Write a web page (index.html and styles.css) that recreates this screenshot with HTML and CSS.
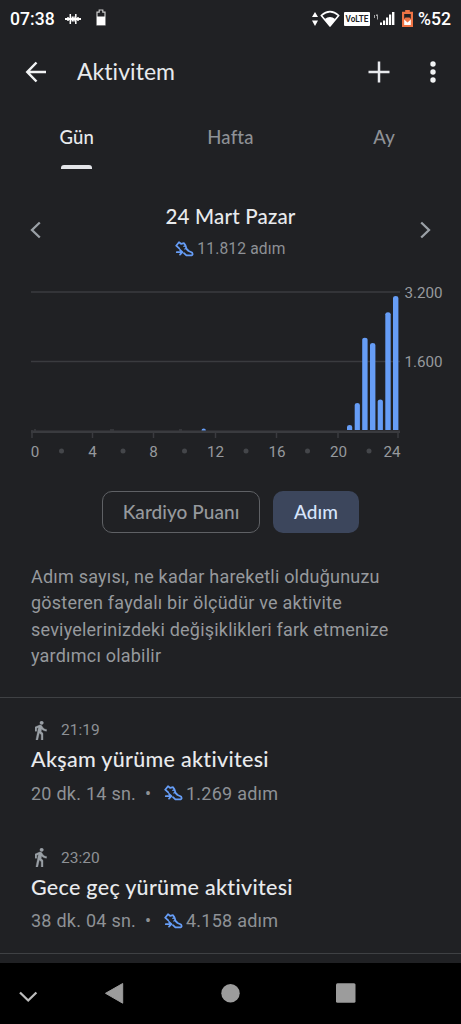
FILE: index.html
```html
<!DOCTYPE html>
<html lang="tr">
<head>
    <meta charset="UTF-8">
    <meta name="viewport" content="width=device-width, initial-scale=1.0">
    <title>Aktivitem</title>
    <link rel="stylesheet" href="styles.css">
</head>
<body>
    <svg class="defs" width="0" height="0">
        <symbol id="shoe" viewBox="0 0 19 16">
            <g fill="none" stroke="#669df6" stroke-width="1.8" stroke-linejoin="round" stroke-linecap="round">
                <path d="M4.200 7.400 1.200 4.700 4 1.300 6.300 2.900 9 2.200 10.400 4.300 11.600 8 13.600 10 17 11.500Q18.400 13.800 16.600 14.400H11.400L9 12.200"/>
                <path d="M1.800 11.200H7.200M5 8.800 7.400 11.200 5 13.600"/>
                <path d="M8.800 5.400 10.200 4.900M9.800 8 11.200 7.400" stroke-width="1.300"/>
            </g>
        </symbol>
        <symbol id="walk" viewBox="6 1.5 13.5 21.5">
            <path fill="#9aa0a6" stroke="#9aa0a6" stroke-width=".4" d="M13.500 5.500c1.100 0 2-.9 2-2s-.9-2-2-2-2 .9-2 2 .9 2 2 2zM9.800 8.900L7 23h2.100l1.800-8 2.100 2v6h2v-7.500l-2.100-2 .6-3C14.800 12 16.800 13 19 13v-2c-1.900 0-3.500-1-4.300-2.400l-1-1.600c-.4-.6-1-1-1.700-1-.3 0-.5.1-.8.1L6 8.300V13h2V9.600l1.800-.7"/>
        </symbol>
    </svg>

    <header class="status">
        <span class="clock">07:38</span>
        <svg class="wave" width="16" height="14" viewBox="0 0 16 14" stroke="#fff" stroke-width="1.5">
            <path d="M0 7H16" stroke-width="2"/>
            <path d="M3 5V9M5.300 2V12M7.300 4.500V9.500M9 4.500V9.500M10.800 2V12M13 5V9"/>
        </svg>
        <svg class="battery" width="10" height="17" viewBox="0 0 10 17">
            <path d="M1 16V3.200H3.200V1H6.800V3.200H9V16Z" fill="none" stroke="#ccc" stroke-width="1.200"/>
            <path d="M1 7.500H9V16H1Z" fill="#fff"/>
        </svg>
        <div class="status-right">
            <svg width="6" height="14" viewBox="0 0 6 14" fill="#fff"><path d="M3 0 6 5H0ZM3 14 0 8.500H6Z"/></svg>
            <svg class="wifi" width="20" height="18" viewBox="0 0 20 18">
                <path d="M1.300 5.500Q10-2.200 18.700 5.500L10 16Z" fill="none" stroke="#fff" stroke-width="1.600" stroke-linejoin="round"/>
                <path d="M4.800 9Q10 5.200 15.200 9L10 16.500Z" fill="#fff"/>
            </svg>
            <span class="volte">VoLTE</span>
            <svg class="signal" width="21" height="15" viewBox="0 0 21 15" fill="#fff">
                <path d="M0 4H1V7H0ZM2 3.500H4V8.500H3V5H2Z" opacity=".6"/>
                <path d="M6 11.500H8V14H6ZM9 9.500H11.200V14H9ZM12 6.500H14.200V14H12ZM15 3.500H17.200V14H15ZM18 1H20.400V14H18Z"/>
            </svg>
            <svg class="low" width="11" height="17" viewBox="0 0 11 17">
                <path d="M3.200 0H7.800V1.800H11V17H0V1.800H3.200Z" fill="#ee7344"/>
                <path d="M2.200 4H8.800V9L7.500 7.500H3.500L2.200 9Z" fill="#202124"/>
                <path d="M2.200 9.500 5.500 12.500 8.800 9.500V15H2.200Z" fill="#fff"/>
            </svg>
            <span class="percent">%52</span>
        </div>
    </header>

    <div class="appbar">
        <svg width="22" height="22" viewBox="0 0 22 22" fill="none" stroke="#f1f3f4" stroke-width="2.500"><path d="M21 11H2.500M11.500 1.500 2.300 11 11.500 20.500"/></svg>
        <h1>Aktivitem</h1>
        <svg class="plus" width="22" height="22" viewBox="0 0 22 22" stroke="#e8eaed" stroke-width="2.500"><path d="M11 .5V21.500M.5 11H21.500"/></svg>
        <svg width="6" height="22" viewBox="0 0 6 22" fill="#f1f3f4"><circle cx="3" cy="3" r="2.700"/><circle cx="3" cy="11" r="2.700"/><circle cx="3" cy="19" r="2.700"/></svg>
    </div>

    <nav class="tabs">
        <a class="tab active">Gün</a>
        <a class="tab">Hafta</a>
        <a class="tab">Ay</a>
    </nav>

    <section class="day">
        <svg width="12" height="18" viewBox="0 0 12 18" fill="none" stroke="#9aa0a6" stroke-width="2.300"><path d="M10.800 1.500 3 9 10.800 16.500"/></svg>
        <div class="day-info">
            <h2>24 Mart Pazar</h2>
            <p><svg class="shoe" width="19" height="16"><use href="#shoe"/></svg>11.812 adım</p>
        </div>
        <svg width="12" height="18" viewBox="0 0 12 18" fill="none" stroke="#9aa0a6" stroke-width="2.300"><path d="M1.200 1.500 9 9 1.200 16.500"/></svg>
    </section>

    <svg class="chart" width="461" height="190" viewBox="0 280 461 190">
        <g class="grid">
            <path d="M31 292H400M31 361.500H400"/>
            <path class="axis" d="M31 431.800H400"/>
            <path d="M32 430V438M92.500 432V438M153.500 432V438M215.500 432V438M276.500 432V438M338 432V438M398 432V438"/>
            <path d="M34 430H36M110 430H114M179 430H182"/>
        </g>
        <g class="bars">
            <path d="M201.500 430.500a2.200 2 0 0 1 4.400 0z"/>
            <path d="M347 430V427q0-2 2.600-2t2.600 2V430z"/>
            <path d="M354.700 430V405q0-2 2.600-2t2.600 2V430z"/>
            <path d="M362.200 430V340q0-2.300 2.700-2.300t2.700 2.300V430z"/>
            <path d="M370 430V345q0-2 2.700-2t2.700 2V430z"/>
            <path d="M377.700 430V401.500q0-2 2.600-2t2.600 2V430z"/>
            <path d="M385.300 430V314.300q0-2 2.700-2t2.700 2V430z"/>
            <path d="M393 430V298q0-2 2.700-2t2.700 2V430z"/>
        </g>
        <g class="dots">
            <circle cx="61.500" cy="451" r="2.500"/><circle cx="123" cy="451" r="2.500"/><circle cx="184.500" cy="451" r="2.500"/>
            <circle cx="246" cy="451" r="2.500"/><circle cx="307.500" cy="451" r="2.500"/><circle cx="369" cy="451" r="2.500"/>
        </g>
        <g class="labels">
            <text x="35" y="456.500">0</text><text x="92.500" y="456.500">4</text><text x="153.500" y="456.500">8</text>
            <text x="215.500" y="456.500">12</text><text x="277" y="456.500">16</text><text x="338.500" y="456.500">20</text><text x="392" y="456.500">24</text>
            <text x="423.500" y="298">3.200</text><text x="423.500" y="367">1.600</text>
        </g>
    </svg>

    <div class="chips">
        <button class="chip chip-outline">Kardiyo Puanı</button>
        <button class="chip chip-on">Adım</button>
    </div>

    <p class="about">Adım sayısı, ne kadar hareketli olduğunuzu<br>gösteren faydalı bir ölçüdür ve aktivite<br>seviyelerinizdeki değişiklikleri fark etmenize<br>yardımcı olabilir</p>

    <main class="list">
        <article class="entry">
            <div class="time"><svg width="12" height="19"><use href="#walk"/></svg>21:19</div>
            <h3>Akşam yürüme aktivitesi</h3>
            <div class="meta"><span class="length">20 dk. 14 sn.</span><span class="sep">•</span><svg class="shoe" width="19" height="16"><use href="#shoe"/></svg>1.269 adım</div>
        </article>
        <article class="entry">
            <div class="time"><svg width="12" height="19"><use href="#walk"/></svg>23:20</div>
            <h3>Gece geç yürüme aktivitesi</h3>
            <div class="meta"><span class="length">38 dk. 04 sn.</span><span class="sep">•</span><svg class="shoe" width="19" height="16"><use href="#shoe"/></svg>4.158 adım</div>
        </article>
    </main>

    <footer class="navbar">
        <svg width="461" height="61" viewBox="0 963 461 61" fill="#9c9c9c">
            <path d="M20 992.500 28.200 1000.500 36.400 992.500" fill="none" stroke="#bdbdbd" stroke-width="2.300"/>
            <path d="M105.500 993.300 122.700 983.500V1003.200Z" stroke="#9c9c9c" stroke-linejoin="round"/>
            <circle cx="230.500" cy="993.200" r="9.200"/>
            <rect x="336" y="983.300" width="19.500" height="19.500" rx="1.500"/>
        </svg>
    </footer>
</body>
</html>
```

FILE: styles.css
```css
* {
    box-sizing: border-box;
}
body {
    margin: 0;
    width: 461px;
    height: 1024px;
    overflow: hidden;
    display: flex;
    flex-direction: column;
    background: #202124;
    color: #e8eaed;
    font-family: Roboto, sans-serif;
}
h1, h2, h3, p {
    margin: 0;
}
svg {
    display: block;
    flex: none;
}
.defs {
    position: absolute;
}
h1, h2, h3, .tab, .chip {
    font-family: Lato, sans-serif;
    white-space: nowrap;
}

/* status bar */
.status {
    height: 36px;
    display: flex;
    align-items: center;
    padding: 1px 10px 0 10px;
    color: #fff;
    font-size: 17.6px;
    font-weight: 500;
}
.clock {
    width: 55px;
}
.battery {
    margin-left: 15px;
    margin-top: -2px;
}
.status-right {
    margin-left: auto;
    display: flex;
    align-items: center;
}
.wifi {
    margin-left: 2px;
}
.volte {
    width: 26px;
    height: 14px;
    margin-left: 4px;
    background: #fff;
    border-radius: 1px;
    color: #202124;
    font-size: 8.2px;
    font-weight: 600;
    line-height: 14px;
    text-align: center;
}
.signal {
    margin-left: 4px;
}
.low {
    margin: -1px 5px 0 7px;
}

/* app bar */
.appbar {
    height: 72px;
    display: flex;
    align-items: center;
    padding: 0 25px;
}
h1 {
    margin: -2px 0 0 30px;
    font-size: 23px;
    font-weight: 400;
    letter-spacing: 0.05px;
}
.plus {
    margin: 0 40px 0 auto;
}

.tabs {
    display: grid;
    grid-template-columns: repeat(3, 1fr);
    height: 61px;
}
.tab {
    display: flex;
    flex-direction: column;
    align-items: center;
    justify-content: space-between;
    padding-top: 18px;
    color: #8e9196;
    font-size: 18.5px;
    font-weight: 500;
    line-height: 22px;
    letter-spacing: 0.2px;
}
.active {
    color: #e8eaed;
}
.active::after {
    content: "";
    width: 31px;
    height: 4px;
    border-radius: 3px 3px 0 0;
    background: #e3e4e8;
}

/* day picker */
.day {
    height: 111px;
    display: flex;
    align-items: center;
    justify-content: space-between;
    padding: 11px 29px 0;
}
.day-info {
    text-align: center;
    padding-top: 3px;
}
h2 {
    font-size: 20.5px;
    font-weight: 500;
    line-height: 26px;
    letter-spacing: 0.2px;
}
.day-info p {
    display: flex;
    align-items: center;
    justify-content: center;
    margin-top: 7px;
    padding-top: 1px;
    color: #8e9196;
    font-size: 15.6px;
    line-height: 24px;
    letter-spacing: 0.15px;
}
.shoe {
    margin-right: 3px;
}

/* chart */
.grid {
    fill: none;
    stroke: #3a3b3f;
    stroke-width: 1.5;
}
.axis {
    stroke-width: 2.5;
}
.bars {
    fill: #669df6;
}
.dots {
    fill: #44464a;
}
.labels {
    fill: #96999d;
    font-size: 15.2px;
    text-anchor: middle;
}

.chips {
    display: flex;
    gap: 13px;
    padding: 21px 0 0 102px;
}
.chip {
    height: 42px;
    padding: 0 0 2px;
    border: 0;
    border-radius: 10px;
    font-size: 19px;
    font-weight: 500;
    letter-spacing: 0.05px;
}
.chip-outline {
    width: 158px;
    border: 1.5px solid #5f6165;
    background: none;
    color: #96999d;
}
.chip-on {
    width: 86px;
    background: #3c465c;
    color: #d6e4fb;
}

.about {
    height: 165px;
    padding: 31px 0 0 31px;
    border-bottom: 1.5px solid #3f4144;
    color: #96999d;
    font-size: 18px;
    line-height: 26.3px;
    letter-spacing: 0.21px;
    white-space: nowrap;
}

/* activities */
.list {
    height: 256px;
    padding: 20px 0 0 31px;
    border-bottom: 1.5px solid #3f4144;
}
.entry {
    height: 127.5px;
}
.time {
    display: flex;
    align-items: center;
    gap: 14px;
    padding-left: 4px;
    height: 24px;
    color: #8e9196;
    font-size: 15.5px;
}
h3 {
    margin-top: 4px;
    font-size: 21.5px;
    font-weight: 500;
    line-height: 26px;
    letter-spacing: 0.3px;
}
.meta {
    display: flex;
    align-items: center;
    margin-top: 9px;
    height: 24px;
    color: #8e9196;
    font-size: 18px;
    letter-spacing: 0.25px;
}
.length {
    width: 114px;
}
.sep {
    width: 19px;
    font-size: 18px;
}

.navbar {
    height: 61px;
    margin-top: auto;
    background: #000;
}
```
